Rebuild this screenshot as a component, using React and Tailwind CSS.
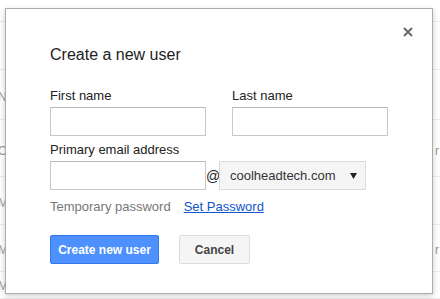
import React from "react";

const rows = [
  { h: 22, left: "", mid: "", right: "" },
  { h: 48, left: "", mid: "", right: "" },
  { h: 50, left: "N", mid: "", right: "" },
  { h: 57, left: "C", mid: "", right: "r" },
  { h: 48, left: "M", mid: "", right: "" },
  { h: 47, left: "M", mid: "", right: "r" },
  { h: 27, left: "M1.00", mid: "1011GB", right: "Active" },
];

const Field = ({ label, className = "" }) => (
  <div className={`flex flex-col ${className}`}>
    <label className="text-[13px] leading-[15px] text-[#222] mb-[4px]">{label}</label>
    <input className="w-[156px] h-[29px] border border-[#c8c8c8] border-t-[#b8b8b8] bg-white outline-none" />
  </div>
);

export default function App() {
  return (
    <div className="relative w-[440px] h-[299px] overflow-hidden bg-white font-['Liberation_Sans',Arial,sans-serif]">
      {/* table behind the dialog */}
      <div className="flex flex-col">
        {rows.map((r, i) => (
          <div
            key={i}
            className="relative flex items-center border-b border-[#ebebeb] text-[12px] text-[#999]"
            style={{ height: r.h }}
          >
            <span className="absolute left-[-2px] top-[55%] -translate-y-1/2">{r.left}</span>
            <span className="absolute left-[135px] top-[60%] -translate-y-1/2">{r.mid}</span>
            <span className="absolute left-[322px] top-[60%] -translate-y-1/2">{r.right === "Active" ? "Active" : ""}</span>
            <span className="absolute left-[435px] top-[55%] -translate-y-1/2">{r.right === "r" ? "r" : ""}</span>
          </div>
        ))}
      </div>

      {/* dialog */}
      <div className="absolute left-[5px] top-[8px] w-[428px] h-[286px] bg-white border border-[#acacac] shadow-[0_2px_6px_rgba(0,0,0,0.2)] pl-[44px] pt-[36px]">
        <button className="absolute right-[18px] top-[17px] w-[12px] h-[12px] flex items-center justify-center">
          <svg width="10" height="10" viewBox="0 0 10 10">
            <path d="M1 1L9 9M9 1L1 9" stroke="#666" strokeWidth="1.8" />
          </svg>
        </button>

        <h1 className="text-[16px] leading-[20px] text-[#222]">Create a new user</h1>

        <div className="flex gap-[26px] mt-[23px]">
          <Field label="First name" />
          <Field label="Last name" />
        </div>

        <div className="flex flex-col mt-[6px]">
          <label className="text-[13px] leading-[15px] text-[#222] mb-[4px]">Primary email address</label>
          <div className="flex items-center">
            <input className="w-[156px] h-[29px] border border-[#c8c8c8] border-t-[#b8b8b8] bg-white outline-none" />
            <span className="w-[13px] text-[14px] text-[#222] text-center mt-[2px]">@</span>
            <div className="w-[147px] h-[29px] flex items-center justify-between border border-[#dcdcdc] bg-[#f5f5f5] pl-[10px] pr-[8px]">
              <span className="text-[13px] text-[#333]">coolheadtech.com</span>
              <svg width="7" height="6" viewBox="0 0 7 6">
                <path d="M0 0H7L3.5 6Z" fill="#222" />
              </svg>
            </div>
          </div>
        </div>

        <div className="flex items-center mt-[9px] text-[13px] leading-[15px]">
          <span className="text-[#777]">Temporary password</span>
          <a href="#" className="ml-[13px] text-[#15c] underline">Set Password</a>
        </div>

        <div className="flex gap-[20px] mt-[21px]">
          <button className="w-[109px] h-[29px] rounded-[2px] bg-[#4d90fe] border border-[#3079ed] text-white text-[12px] font-bold">
            Create new user
          </button>
          <button className="w-[71px] h-[29px] rounded-[2px] bg-[#f5f5f5] border border-[#dcdcdc] text-[#444] text-[12px] font-bold">
            Cancel
          </button>
        </div>
      </div>
    </div>
  );
}
